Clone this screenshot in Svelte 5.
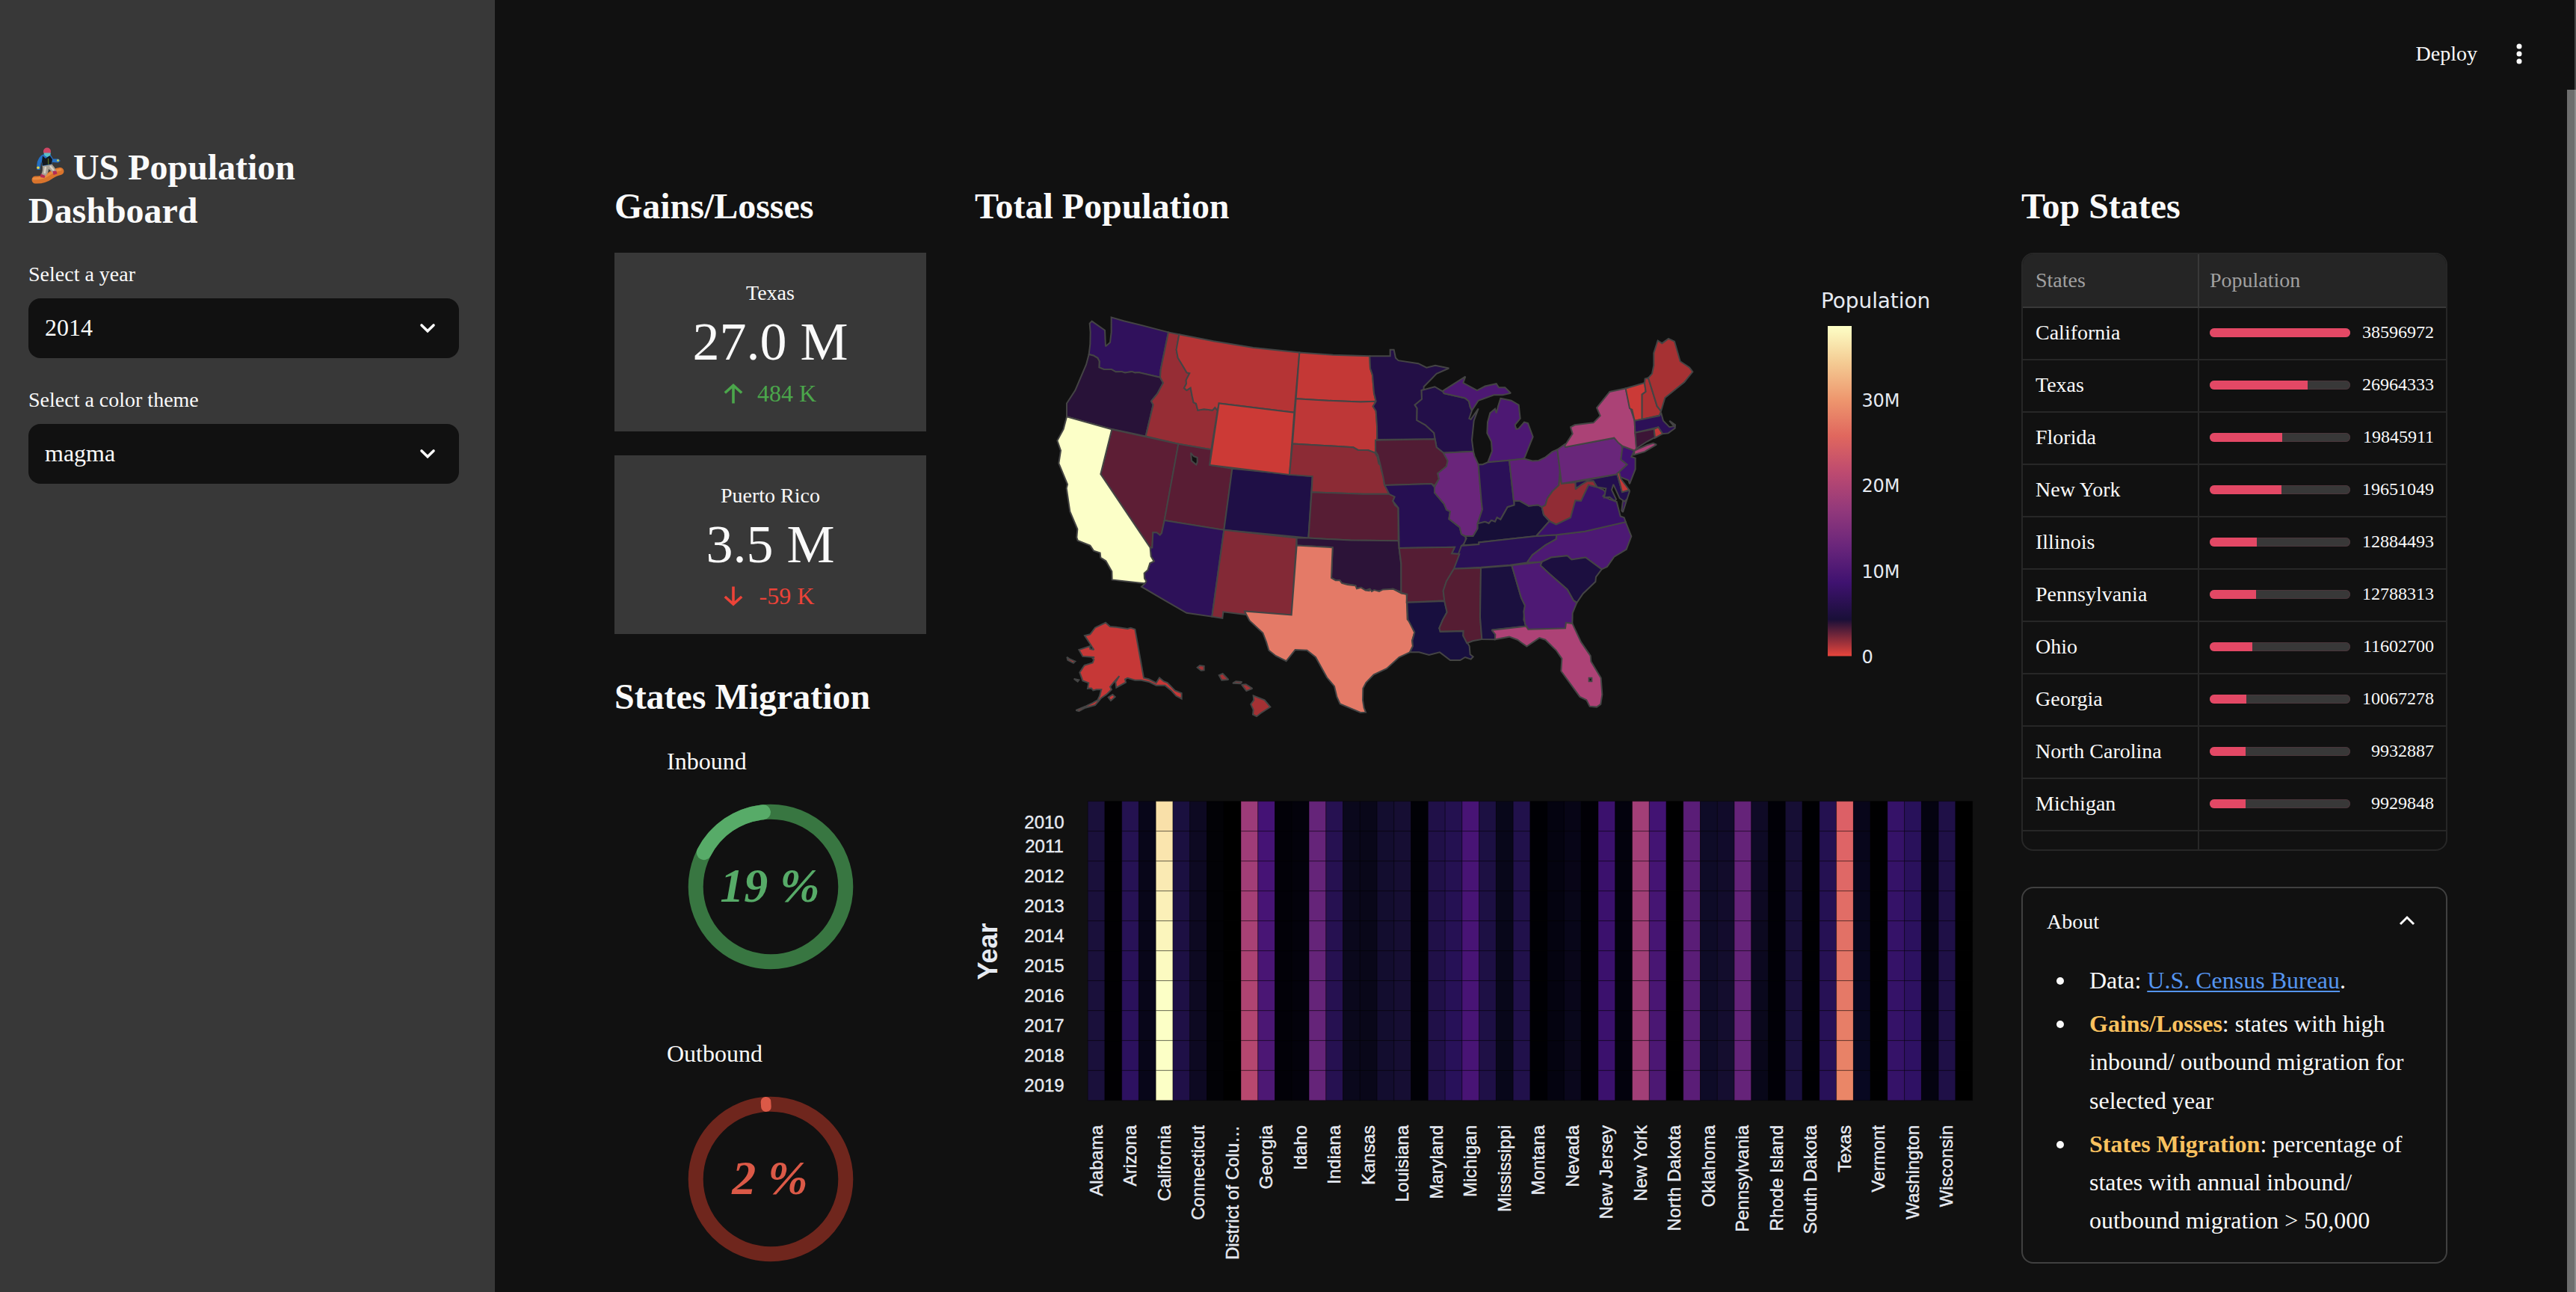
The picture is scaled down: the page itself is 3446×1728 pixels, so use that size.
<script>
  const gains = [
    { name: 'Texas', value: '27.0 M', delta: '484 K', up: true },
    { name: 'Puerto Rico', value: '3.5 M', delta: '-59 K', up: false }
  ];

  const top = [
    ['California', 38596972],
    ['Texas', 26964333],
    ['Florida', 19845911],
    ['New York', 19651049],
    ['Illinois', 12884493],
    ['Pennsylvania', 12788313],
    ['Ohio', 11602700],
    ['Georgia', 10067278],
    ['North Carolina', 9932887],
    ['Michigan', 9929848],
    ['New Jersey', 8864525]
  ];
  const max = top[0][1];

  // Western states, including the plains states that reach to the middle.
  const west = [
    ['#30115c', 'M290,66 340,79 430,99 519,120 503,190 488,255 486,283 400,265 385,266 372,262 345,266 330,262 308,263 290,254 260,254 241,247 242,225 235,213 218,204 200,200 205,163 206,120 203,88 212,80 264,113 267,171 285,157 290,120Z'],
    ['#281238', 'M200,200 218,204 235,213 242,225 241,247 260,254 290,254 308,263 330,262 345,266 372,262 385,266 400,265 486,283 490,290 498,303 475,342 450,369 458,382 440,450 428,496 290,470 111,425 111,377 145,330 189,237Z'],
    ['#962d35', 'M519,120 562,128 551,183 557,212 578,243 593,266 604,268 590,293 591,306 582,322 592,330 608,321 614,350 620,374 630,378 637,402 662,398 696,402 706,392 716,403 691,544 559,524 428,496 440,450 458,382 450,369 475,342 498,303 490,290 486,283 488,255 503,190Z'],
    ['#b53435', 'M562,128 700,152 860,176 1045,193 1024,410 722,377 716,403 706,392 696,402 662,398 637,402 630,378 620,374 614,350 608,321 592,330 582,322 591,306 590,293 604,268 593,266 578,243 557,212 551,183Z'],
    ['#5d1e35', 'M292,471 559,524 503,800 492,846 485,853 472,844 457,844 454,899 446,899 247,633Z'],
    ['#591d34', 'M559,524 691,544 685,600 775,613 742,835 503,800Z'],
    ['#1f0f46', 'M775,613 1005,633 1097,641 1081,864 742,835Z'],
    ['#cc3a36', 'M722,377 1024,410 1005,635 685,600Z'],
    ['#2d1159', 'M503,800 742,835 694,1148 592,1135 500,1087 411,1040 425,1028 430,1020 423,1010 422,991 436,980 445,955 461,948 449,930 446,899 454,899 457,844 472,844 485,853 492,846Z'],
    ['#832936', 'M742,835 1034,864 1013,1142 825,1129 830,1141 739,1131 736,1154 694,1148Z'],
    ['#fcffc8', 'M111,425 292,471 247,633 446,899 449,930 461,948 445,955 436,980 422,991 423,1010 430,1020 425,1028 293,1015 292,985 268,947 247,935 245,918 219,910 205,891 155,873 151,862 154,832 124,768 110,684 114,670 79,594 87,548 73,512 98,470Z'],
    ['#c43836', 'M1045,193 1180,202 1327,206 1329,250 1338,275 1344,340 1352,370 1290,372 1180,368 1031,360Z'],
    ['#be3737', 'M1031,360 1180,368 1290,372 1352,370 1340,388 1352,405 1357,460 1356,510 1350,515 1353,540 1348,556 1320,546 1280,546 1261,536 1017,523Z'],
    ['#8c2b35', 'M1017,523 1261,536 1280,546 1320,546 1348,556 1358,572 1363,595 1370,600 1374,620 1383,645 1385,668 1405,705 1300,705 1094,698 1097,641 1005,635Z'],
    ['#571d34', 'M1094,698 1300,705 1405,705 1427,713 1420,730 1428,745 1441,755 1442,874 1250,872 1081,864Z'],
    ['#2c1338', 'M1034,864 1081,864 1250,872 1442,874 1445,900 1453,960 1454,1060 1420,1048 1375,1055 1335,1057 1327,1048 1310,1053 1292,1043 1275,1047 1270,1036 1215,1027 1207,1017 1190,1017 1173,1008 1178,898 1034,891Z'],
    ['#e47a67', 'M1034,891 1178,898 1173,1008 1190,1017 1207,1017 1215,1027 1238,1033 1270,1036 1275,1047 1292,1043 1310,1053 1325,1055 1327,1047 1335,1057 1345,1052 1365,1057 1380,1050 1420,1048 1454,1064 1475,1067 1478,1158 1490,1170 1507,1205 1497,1235 1500,1255 1488,1277 1445,1295 1395,1336 1343,1358 1312,1387 1300,1408 1299,1450 1304,1478 1311,1494 1290,1495 1208,1464 1195,1438 1185,1400 1155,1368 1110,1295 1075,1270 1028,1268 992,1309 950,1290 922,1270 912,1240 898,1207 845,1163 825,1129 1013,1142Z'],
    ['#c63837', 'M385,1194 420,1370 440,1374 470,1388 483,1369 500,1382 515,1387 545,1415 572,1425 572,1445 550,1435 530,1415 505,1397 470,1397 440,1384 410,1378 385,1378 355,1370 345,1375 348,1386 310,1405 307,1385 322,1363 300,1385 285,1402 291,1412 270,1430 250,1442 225,1468 185,1478 160,1490 148,1487 190,1471 215,1460 235,1450 243,1435 250,1412 230,1412 217,1415 210,1407 195,1408 199,1388 175,1380 163,1350 182,1324 215,1315 220,1303 213,1298 222,1295 175,1292 160,1268 203,1255 205,1265 220,1268 200,1240 183,1217 205,1212 225,1188 267,1170 285,1184 310,1186 355,1192 368,1189Z M278,1440 295,1430 305,1438 288,1452Z M112,1294 120,1300 145,1310 138,1316 115,1305Z M140,1373 160,1377 155,1383Z'],
    ['#a43134', 'M635,1332 645,1325 662,1327 662,1342 650,1343Z M722,1360 737,1354 760,1376 733,1378Z M777,1389 790,1382 814,1384 808,1390Z M813,1394 830,1393 856,1408 832,1417Z M860,1434 905,1450 928,1475 890,1497 873,1509 858,1502 860,1485 850,1465 862,1450Z']
  ];

  // Eastern states, in the frame of the eastern half.
  const east = [
    ['#230f46', 'M37,206 119,206 119,183 134,183 141,213 152,222 232,233 265,248 300,240 355,250 305,270 254,317 254,328 245,330 246,362 218,383 227,395 226,438 260,455 295,484 299,506 67,508 66,460 62,405 50,388 62,370 54,340 48,275 39,250Z'],
    ['#230f49', 'M245,330 254,328 298,317 330,334 335,341 420,358 435,370 440,390 447,403 436,432 443,435 473,396 455,440 447,510 453,551 333,556 305,536 299,506 295,484 260,455 226,438 227,395 218,383 246,362Z'],
    ['#4d1873', 'M330,332 421,280 412,303 468,330 500,315 545,306 555,320 580,320 603,340 570,347 535,347 473,367 447,403 440,390 435,370 420,358 335,341Z M562,359 605,367 635,383 641,432 620,455 625,470 635,468 657,445 672,449 692,498 657,577 597,583 511,590 528,550 525,515 508,485 510,445 520,412 540,397 545,412 552,388Z'],
    ['#511c34', 'M60,510 299,506 305,536 333,556 350,585 345,605 310,630 315,650 297,675 285,668 97,673 90,640 80,600 70,565 60,550Z'],
    ['#260f52', 'M97,673 285,668 297,680 297,700 335,740 345,762 360,768 355,795 398,825 405,850 422,860 422,880 405,892 397,922 366,920 378,897 155,900 152,755 130,730 137,715 115,705Z'],
    ['#6a257b', 'M333,556 453,551 458,568 473,598 486,740 489,760 470,812 470,830 452,857 420,857 405,850 398,825 355,795 360,768 345,762 335,740 297,700 297,680 315,650 310,630 345,605 350,585Z'],
    ['#2b1058', 'M473,598 490,598 511,590 597,583 617,745 590,752 562,797 548,790 540,805 525,800 515,811 500,805 470,812 489,760 486,740Z'],
    ['#170f38', 'M617,745 617,730 640,730 675,748 712,744 728,752 735,780 758,803 705,857 475,880 475,887 412,890 425,865 420,857 452,857 470,830 470,812 500,805 515,811 525,800 540,805 548,790 562,797 590,752Z'],
    ['#5e2077', 'M597,583 657,577 690,585 715,584 740,573 770,552 790,544 800,620 796,673 770,695 750,720 742,745 728,752 712,744 675,748 640,730 615,730Z'],
    ['#2a1057', 'M405,892 475,887 475,880 705,857 787,852 785,868 742,890 690,925 668,953 600,962 483,970 375,975 385,940Z'],
    ['#551d34', 'M155,900 378,897 366,920 397,922 375,975 345,1020 332,1055 337,1090 185,1097 187,1067 163,1062 163,955Z'],
    ['#180f3f', 'M187,1097 337,1092 347,1132 330,1160 316,1190 320,1202 413,1200 412,1217 437,1255 440,1285 452,1293 443,1302 420,1295 400,1306 360,1306 318,1277 275,1287 235,1277 198,1277 210,1255 208,1235 217,1205 190,1158Z'],
    ['#551d33', 'M375,975 483,972 480,1150 487,1230 450,1236 427,1244 412,1217 413,1200 320,1202 316,1190 330,1160 347,1132 337,1092 332,1055 345,1020Z'],
    ['#1b103f', 'M483,972 607,963 645,1080 660,1108 655,1160 668,1182 527,1196 541,1213 540,1231 487,1230 480,1150Z'],
    ['#4d1974', 'M668,953 690,925 742,890 785,868 787,852 900,840 1064,806 1087,858 1067,905 1018,932 990,968 968,977 903,934 847,942 830,928 765,934 728,950Z'],
    ['#1c0f40', 'M728,950 765,934 830,928 847,942 903,934 968,977 945,1005 943,1022 893,1065 868,1098 855,1090 830,1050 760,995 722,963Z'],
    ['#4e1974', 'M607,963 728,950 722,963 760,995 830,1050 855,1090 868,1098 851,1135 850,1173 825,1170 822,1195 673,1194 660,1175 655,1130 660,1108 645,1080Z'],
    ['#ad4276', 'M527,1197 665,1183 673,1194 822,1190 825,1170 850,1173 885,1240 923,1290 925,1310 965,1370 970,1430 964,1465 948,1475 920,1473 907,1450 880,1438 805,1345 808,1300 785,1270 742,1232 718,1225 667,1256 630,1232 597,1221 540,1231 541,1213Z'],
    ['#3a1169', 'M705,857 758,803 785,815 840,790 862,728 885,728 915,672 950,680 975,690 985,700 973,713 1000,724 1028,733 1043,785 1058,790 1064,806 900,840 787,852Z M1053,730 1070,722 1053,770 1048,765Z'],
    ['#230f4e', 'M862,662 1030,633 1050,697 1076,692 1080,695 1070,722 1060,732 1040,720 1015,670 1008,690 1026,724 1020,730 1000,716 978,718 985,685 950,680 935,658 910,658 863,685Z'],
    ['#912c35', 'M800,642 807,667 862,663 863,688 885,672 910,658 935,658 948,680 915,672 885,730 862,728 843,790 785,815 760,803 735,780 728,752 742,745 750,720 770,695 796,673Z'],
    ['#69267a', 'M790,544 820,525 822,535 1018,502 1045,525 1052,540 1045,580 1070,598 1040,625 1030,633 807,667Z'],
    ['#40116f', 'M1052,532 1100,545 1087,570 1103,575 1103,615 1080,668 1075,655 1042,643 1038,625 1070,598 1045,580Z'],
    ['#c43836', 'M1030,630 1038,625 1045,650 1078,690 1050,698Z'],
    ['#ab4276', 'M820,530 851,487 843,463 860,455 935,447 962,422 948,393 1000,335 1064,323 1080,385 1100,440 1102,480 1108,540 1100,548 1052,532 1035,520 1018,502 822,535Z M1100,548 1150,528 1175,521 1188,526 1140,552 1097,563Z'],
    ['#cb3a37', 'M1064,323 1140,303 1145,335 1130,345 1130,435 1100,440 1090,400 1080,395Z'],
    ['#ac3234', 'M1140,303 1142,288 1155,285 1190,387 1206,405 1200,420 1130,435 1130,345 1145,335Z'],
    ['#a63133', 'M1155,285 1170,270 1177,240 1177,195 1193,150 1210,160 1236,143 1260,153 1283,225 1320,247 1333,263 1300,300 1222,357 1206,405 1190,387Z'],
    ['#2c1057', 'M1100,440 1200,422 1206,410 1215,440 1240,463 1258,460 1240,440 1263,455 1262,467 1235,485 1212,487 1195,463 1102,483Z'],
    ['#3c1536', 'M1102,483 1178,470 1182,500 1150,515 1107,540Z'],
    ['#c23837', 'M1178,470 1195,463 1212,487 1182,502Z']
  ];

  // [state, colour in 2010, colour in 2019]
  const heat = [
    ['Alabama', '#1a103b'], ['Alaska', '#010003'], ['Arizona', '#241250', '#2d1160'], ['Arkansas', '#080619'],
    ['California', '#f9e0a9', '#fcffc6'], ['Colorado', '#1a103f', '#201048'], ['Connecticut', '#0d0922'], ['Delaware', '#020206'],
    ['District of Colu…', '#000000'], ['Florida', '#9c3b79', '#b8486f'], ['Georgia', '#441275', '#4d1874'], ['Hawaii', '#020108'],
    ['Idaho', '#03020b'], ['Illinois', '#652479'], ['Indiana', '#261151'], ['Iowa', '#0a081c'],
    ['Kansas', '#090719'], ['Kentucky', '#130d2f'], ['Louisiana', '#160e33'], ['Maine', '#010106'],
    ['Maryland', '#201048'], ['Massachusetts', '#241150', '#28115a'], ['Michigan', '#481475'], ['Minnesota', '#1c1042', '#1f1047'],
    ['Mississippi', '#08071a'], ['Missouri', '#21114b'], ['Montana', '#000004'], ['Nebraska', '#040310'],
    ['Nevada', '#070516', '#0a071c'], ['New Hampshire', '#010006'], ['New Jersey', '#3b116d'], ['New Mexico', '#03020d'],
    ['New York', '#a23f77'], ['North Carolina', '#421373', '#4c1873'], ['North Dakota', '#000001'], ['Ohio', '#5a1d77'],
    ['Oklahoma', '#0e0b27'], ['Oregon', '#110b2a', '#150e30'], ['Pennsylvania', '#652379'], ['Puerto Rico', '#0f0a26', '#080719'],
    ['Rhode Island', '#010007'], ['South Carolina', '#160e34', '#1a103f'], ['South Dakota', '#000003'], ['Tennessee', '#241150', '#281158'],
    ['Texas', '#dc6066', '#ea8667'], ['Utah', '#08061a', '#080821'], ['Vermont', '#000001'], ['Virginia', '#351268'],
    ['Washington', '#28115a', '#2f1164'], ['West Virginia', '#040310'], ['Wisconsin', '#1f1047'], ['Wyoming', '#000000']
  ];
  const years = Array.from({ length: 10 }, (_, i) => 2010 + i);
  const cw = 1183.5 / 52;
  const ch = 40;

  const rgb = (h) => [1, 3, 5].map((i) => parseInt(h.slice(i, i + 2), 16));
  function shade(row, i) {
    if (!row[2]) return row[1];
    const a = rgb(row[1]);
    const b = rgb(row[2]);
    const t = row[0] === 'California' ? Math.min(1, i / 6) : i / 9;
    return `rgb(${a.map((v, k) => Math.round(v + (b[k] - v) * t)).join(',')})`;
  }
</script>

<div class="app">
  <aside>
    <h1><svg class="emoji" width="48" height="50" viewBox="0 0 48 50" aria-hidden="true">
        <path d="M9.5 43.5 Q21 44 29 38 Q36 33 42.5 32" fill="none" stroke="#d9742c" stroke-width="10" stroke-linecap="round" />
        <path d="M7 42 Q20 42 28 36 Q35 31 43 30" fill="none" stroke="#ea8b40" stroke-width="3" stroke-linecap="round" />
        <path d="M18.5 24 L31 22 Q35 26 38 33 L33 35 Q30 31 27 29 Q27 34 23 38.5 L17 36.5 Q20 31 18.5 24Z" fill="#aaa194" />
        <path d="M23 26 L21.5 35 M29 25 L34 31" stroke="#d8d1c4" stroke-width="2.4" fill="none" />
        <path d="M17 11 L22 8.5 L29 9 L33 15.5 L40 15.5 L43 18 L40 20.5 L32 20 L31 23 L19 25 L17 19 L15.5 30 L11.5 30 Q10 17 17 11Z" fill="#2470c4" />
        <path d="M19 11.5 L23 15 L28.5 11 L32 16 L31 22.5 L19 24.5 L18 19Z" fill="#14181e" />
        <path d="M26.5 15 L26.8 23" stroke="#688321" stroke-width="1" />
        <path d="M16.5 35.5 l6 2.5 -1 3 -5.5 -1Z M32.5 32 l5 -.5 1 4 -5 1.5Z" fill="#b52c55" />
        <circle cx="25" cy="5.5" r="5" fill="#cf4664" />
        <path d="M20.5 7.5 h9.5 l-1 3.6 -4 2 -3.4 -2Z" fill="#5cc0c4" />
        <circle cx="13" cy="27.2" r="1.8" fill="#e8d84a" /><circle cx="39.5" cy="17.6" r="1.5" fill="#c4cf5a" />
      </svg> US Population Dashboard</h1>
    <div class="field">
      <span class="label">Select a year</span>
      <div class="select"><span>2014</span>
        <svg width="24" height="16" viewBox="0 0 24 16"><path d="M4 4 L12 11.7 L20 4" fill="none" stroke="#fafafa" stroke-width="3.6" stroke-linecap="round" /></svg>
      </div>
    </div>
    <div class="field">
      <span class="label">Select a color theme</span>
      <div class="select"><span>magma</span>
        <svg width="24" height="16" viewBox="0 0 24 16"><path d="M4 4 L12 11.7 L20 4" fill="none" stroke="#fafafa" stroke-width="3.6" stroke-linecap="round" /></svg>
      </div>
    </div>
  </aside>

  <main>
    <header>
      <span>Deploy</span>
      <svg width="8" height="28" viewBox="0 0 8 28"><g fill="#fafafa"><circle cx="4" cy="4" r="3.5" /><circle cx="4" cy="14" r="3.5" /><circle cx="4" cy="24" r="3.5" /></g></svg>
    </header>

    <div class="columns">
      <section class="left">
        <h2>Gains/Losses</h2>
        <div class="cards">
          {#each gains as g}
            <div class="card">
              <div class="name">{g.name}</div>
              <div class="value">{g.value}</div>
              <div class="delta" class:up={g.up}>
                <svg width="26" height="28" viewBox="0 0 26 28">
                  {#if g.up}
                    <path d="M13 26.5 V2.5 M1.8 12.5 L13 2.5 L24.2 12.5" />
                  {:else}
                    <path d="M13 .5 V24 M1.8 14 L13 24 L24.2 14" />
                  {/if}
                </svg>
                <span>{g.delta}</span>
              </div>
            </div>
          {/each}
        </div>
        <h2 class="mig">States Migration</h2>
        <div class="ring inbound">
          <span>Inbound</span>
          <svg width="222" height="222" viewBox="-111 -111 222 222">
            <circle r="100.3" fill="none" stroke="#387641" stroke-width="20" />
            <path d="M-10 -99.8 A100.3 100.3 0 0 0 -89.2 -45.9" fill="none" stroke="#57ab68" stroke-width="20" stroke-linecap="round" />
            <text x="-1" y="20">19 %</text>
          </svg>
        </div>
        <div class="ring outbound">
          <span>Outbound</span>
          <svg width="222" height="222" viewBox="-111 -111 222 222">
            <circle r="100.3" fill="none" stroke="#6f261d" stroke-width="20" />
            <rect x="-6.8" y="-110.3" width="13.6" height="20" rx="6.5" transform="rotate(-3.6)" fill="#db5947" />
            <text x="-1" y="20">2 %</text>
          </svg>
        </div>
      </section>

      <section class="mid">
        <h2>Total Population</h2>
        <svg class="map" width="1336" height="662" viewBox="1304 338 1336 662">
          <defs>
            <linearGradient id="bar" x1="0" y1="0" x2="0" y2="1">
              <stop offset="0" stop-color="#fdffc6" /><stop offset=".1111" stop-color="#f4cb93" />
              <stop offset=".2222" stop-color="#ee976e" /><stop offset=".3333" stop-color="#e0675e" />
              <stop offset=".4444" stop-color="#bd4a70" /><stop offset=".5556" stop-color="#93397b" />
              <stop offset=".6667" stop-color="#6a267b" /><stop offset=".7778" stop-color="#3f1270" />
              <stop offset=".8889" stop-color="#190f38" /><stop offset="1" stop-color="#e8453c" />
            </linearGradient>
          </defs>
          <g transform="translate(1390 400) scale(.33333 .3699)" class="states">
            {#each west as [fill, d]}<path {d} {fill} />{/each}
            <path d="M609,556 620,568 635,573 635,590 631,599 612,585Z" fill="#111" />
            <g transform="translate(1290 0)">
              {#each east as [fill, d]}<path {d} {fill} />{/each}
              <path d="M917,1370 928,1370 928,1382 917,1382Z" fill="#111" />
            </g>
          </g>
          <rect x="2445" y="436" width="32" height="441.5" fill="url(#bar)" />
          <text class="cbt" x="2436" y="412">Population</text>
          <text class="cb" x="2490.5" y="544">30M</text>
          <text class="cb" x="2490.5" y="658">20M</text>
          <text class="cb" x="2490.5" y="773">10M</text>
          <text class="cb" x="2490.5" y="887">0</text>
        </svg>
        <svg class="heat" width="1336" height="680" viewBox="1304 1040 1336 680">
          <g stroke="#000" stroke-opacity=".35" stroke-width="1">
            {#each heat as row, c}
              {#each years as y, r}
                <rect x={1455.2 + c * cw} y={1071.7 + r * ch} width={cw} height={ch} fill={shade(row, r)} />
              {/each}
            {/each}
          </g>
          {#each years as y, r}
            <text class="ax" text-anchor="middle" x="1397" y={r === 0 ? 1107.5 : 1100.3 + r * ch}>{y}</text>
          {/each}
          {#each heat as row, c}
            {#if c % 2 === 0}
              <text class="ax" text-anchor="end" transform="translate({1474.5 + c * cw} 1505) rotate(-90)">{row[0]}</text>
            {/if}
          {/each}
          <text class="year" text-anchor="middle" transform="translate(1333.5 1272.5) rotate(-90)">Year</text>
        </svg>
      </section>

      <section class="right">
        <h2>Top States</h2>
        <div class="table">
          <div class="row head"><span>States</span><span>Population</span></div>
          {#each top as [name, n]}
            <div class="row">
              <span>{name}</span>
              <span class="pop">
                <i class="track"><i class="fill" style="width:{(n / max) * 100}%"></i></i>
                <b>{n}</b>
              </span>
            </div>
          {/each}
        </div>
        <div class="about">
          <div class="about-head"><span>About</span>
            <svg width="24" height="16" viewBox="0 0 24 16"><path d="M3 13 L12 4 L21 13" fill="none" stroke="#fafafa" stroke-width="3" /></svg>
          </div>
          <ul>
            <li><p>Data: <a href="#census">U.S. Census Bureau</a>.</p></li>
            <li><p><strong>Gains/Losses</strong>: states with high inbound/ outbound migration for selected year</p></li>
            <li><p><strong>States Migration</strong>: percentage of states with annual inbound/ outbound migration &gt; 50,000</p></li>
          </ul>
        </div>
      </section>
    </div>
    <div class="edge"></div>
    <div class="thumb"></div>
  </main>
</div>

<style>
  :global(body) { margin: 0; background: #111; overflow: hidden; }
  .app {
    display: flex;
    width: 3446px;
    height: 1728px;
    overflow: hidden;
    background: #111;
    color: #fafafa;
    font-family: "Liberation Serif", "Times New Roman", serif;
    font-size: 28px;
  }
  * { box-sizing: border-box; }
  svg { display: block; flex: none; overflow: visible; }
  h1, h2 { margin: 0; font-size: 48px; line-height: 57.6px; font-weight: 700; letter-spacing: -0.03px; }

  aside { flex: none; width: 662px; padding: 195px 48px 0 38px; background: #383838; }
  h1 { width: 500px; margin-bottom: 41px; }
  .emoji { display: inline-block; vertical-align: -7px; }
  .field { display: flex; flex-direction: column; gap: 16px; margin-bottom: 40px; }
  .label { line-height: 32px; }
  .select {
    display: flex; align-items: center; justify-content: space-between;
    height: 80px; padding: 0 30px 0 22px; border-radius: 16px;
    background: #111; font-size: 32px;
  }
  .select span { padding-bottom: 1px; }

  main { position: relative; flex: 1; min-width: 0; }
  header { display: flex; align-items: center; gap: 52px; justify-content: flex-end; height: 144px; padding-right: 72px; }
  .columns { display: flex; padding: 103px 0 0 160px; align-items: flex-start; }
  section { flex: none; }
  h2 { height: 58px; white-space: nowrap; }
  .left { width: 417px; }
  .mid { width: 1336px; margin-left: 65px; }
  .right { width: 570px; margin-left: 64px; }

  .cards { display: flex; flex-direction: column; gap: 32px; margin: 33px 0 55px; }
  .card { height: 239px; padding-top: 38px; background: #383838; text-align: center; }
  .name { line-height: 32px; }
  .value { margin-top: 9px; font-size: 72px; line-height: 80px; }
  .delta { display: flex; align-items: center; justify-content: center; gap: 18px; height: 40px; margin-top: 9px; font-size: 32px; line-height: 40px; color: #ec4338; }
  .delta.up { color: #4ba64b; }
  .delta span { width: 81px; white-space: nowrap; }
  .delta svg { margin-top: 2px; fill: none; stroke: currentColor; stroke-width: 3.6; }

  .mig { margin-bottom: 37px; }
  .ring { display: flex; flex-direction: column; align-items: center; gap: 37px; margin-bottom: 92px; font-size: 32px; line-height: 40px; }
  .ring span { align-self: flex-start; padding-left: 70px; }

  .map { margin-top: 33px; }
  .heat { margin-top: 40px; }
  .states path { stroke: #444; stroke-width: 2; stroke-linejoin: miter; stroke-miterlimit: 2; vector-effect: non-scaling-stroke; }
  text { fill: #e6eaf1; }
  .ring text { font: italic 700 64px "Liberation Serif", serif; text-anchor: middle; }
  .inbound text { fill: #57ab68; }
  .outbound text { fill: #db5947; }
  .cbt { font: 28px "DejaVu Sans", sans-serif; letter-spacing: -0.1px; }
  .cb { font: 24px "DejaVu Sans", sans-serif; letter-spacing: -0.2px; }
  .ax { font: 24px "Liberation Sans", sans-serif; stroke: #e6eaf1; stroke-width: .4px; }
  .year { font: 700 36px "Liberation Sans", sans-serif; }

  .table { height: 800px; margin-top: 33px; border: 2px solid #272727; border-radius: 16px; overflow: hidden; }
  .row { display: grid; grid-template-columns: 236px 1fr; height: 70px; border-bottom: 2px solid #272727; }
  .row > span { display: flex; align-items: center; padding: 0 0 3px 17px; }
  .row > span:first-child { border-right: 2px solid #272727; padding-left: 17px; }
  .head { height: 72px; background: #252525; color: #a0a0a0; border-bottom-color: #383838; }
  .head > span:first-child { border-right-color: #383838; }
  .head > span:first-child, .head > span:last-child { padding-bottom: 1px; }
  .row > .pop { justify-content: space-between; padding: 0 16px 2px 14px; }
  .head > span:last-child { padding-left: 14px; }
  .track { width: 188px; height: 12px; border-radius: 6px; overflow: hidden; background: #383838; box-shadow: inset 0 0 0 1px #4a363b; }
  .fill { display: block; height: 100%; background: #e34865; }
  .pop b { padding-bottom: 1px; font-size: 24px; font-weight: 400; }

  .about { height: 504px; margin-top: 48px; padding: 29px 32px 0; border: 2px solid #404040; border-radius: 16px; }
  .about-head { display: flex; justify-content: space-between; padding-right: 8px; line-height: 32px; }
  .about-head svg { margin-top: 6px; }
  ul { margin: 37px 0 0; padding: 0 0 0 13px; font-size: 32px; line-height: 51.2px; list-style: none; }
  li { display: flex; gap: 34px; margin-bottom: 7px; }
  li::before { content: ""; flex: none; width: 10px; height: 10px; margin-top: 21px; border-radius: 50%; background: #fafafa; }
  p { margin: 0; }
  a { color: #5595f0; text-decoration-thickness: 2px; text-underline-offset: 3px; text-decoration-skip-ink: none; }
  strong { color: #f9c15f; }

  .edge { position: absolute; top: 0; right: 0; width: 2px; height: 120px; background: #484848; }
  .thumb { position: absolute; top: 120px; right: 0; width: 12px; bottom: 0; background: #6e6e6e; border-right: 2px solid #8b8b8b; }
</style>
